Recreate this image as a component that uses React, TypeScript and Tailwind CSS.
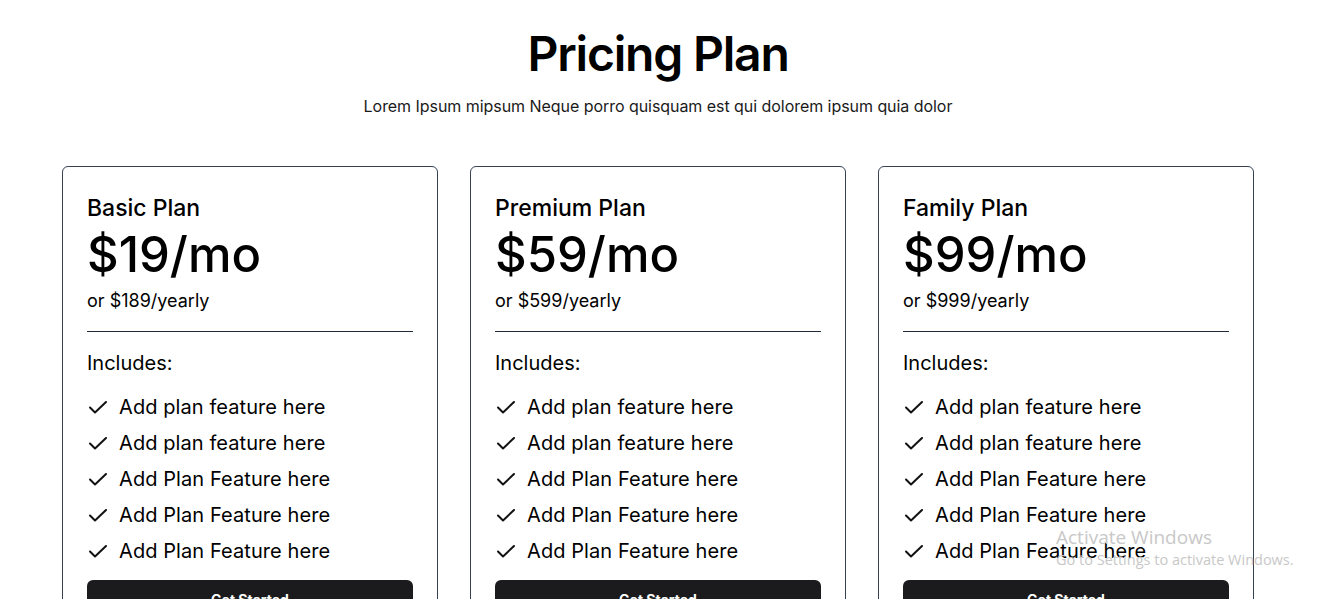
import React from 'react';

const plans = [
  { id: 1, name: 'Basic Plan', price: '$19/mo', yearly: 'or $189/yearly' },
  { id: 2, name: 'Premium Plan', price: '$59/mo', yearly: 'or $599/yearly' },
  { id: 3, name: 'Family Plan', price: '$99/mo', yearly: 'or $999/yearly' },
];

const features = [
  'Add plan feature here',
  'Add plan feature here',
  'Add Plan Feature here',
  'Add Plan Feature here',
  'Add Plan Feature here',
];

const CheckIcon = () => (
  <svg width="18" height="13" viewBox="0 0 18 13" fill="none" className="shrink-0 ml-[2px]">
    <polyline points="1,6.5 6,11.5 17,1" stroke="#111" strokeWidth="2" strokeLinecap="round" strokeLinejoin="round" />
  </svg>
);

const PlanCard: React.FC<{ name: string; price: string; yearly: string }> = ({ name, price, yearly }) => (
  <div className="border border-gray-700 rounded-md px-6 pt-[25px] pb-6 bg-white">
    <h2 className="text-[23px] font-medium text-black leading-8">{name}</h2>
    <div className="text-[49px] font-medium text-black mt-[3px] leading-[56px]">{price}</div>
    <div className="text-lg text-black mt-[4px] leading-7">{yearly}</div>
    <div className="border-t border-gray-800 mt-[16px]"></div>
    <div className="text-xl text-black mt-[17px] leading-7">Includes:</div>
    <ul className="mt-[16px] space-y-2">
      {features.map((f, i) => (
        <li key={i} className="flex items-center gap-3 text-xl text-black leading-7 tracking-[0.08px]">
          <CheckIcon />
          <span>{f}</span>
        </li>
      ))}
    </ul>
    <button className="mt-[15px] w-full h-10 rounded-md bg-[#1b1b1d] text-white text-sm font-bold">
      Get Started
    </button>
  </div>
);

export default function App() {
  return (
    <div className="relative min-h-screen bg-white font-['Inter',sans-serif] text-black overflow-hidden">
      <div className="w-[1192px] ml-[62px] pt-[26px]">
        <div className="text-center">
          <h1 className="text-5xl font-semibold tracking-tight leading-[56px]">Pricing Plan</h1>
          <p className="text-base mt-[12px] text-[#1a1a1a] tracking-[-0.05px]">
            Lorem Ipsum mipsum Neque porro quisquam est qui dolorem ipsum quia dolor
          </p>
        </div>
        <div className="grid grid-cols-3 gap-[32px] mt-[48px]">
          {plans.map((p) => (
            <PlanCard key={p.id} name={p.name} price={p.price} yearly={p.yearly} />
          ))}
        </div>
      </div>
      <div className="absolute left-[1056px] top-[525px] font-['Open_Sans',sans-serif] text-[#c8c8c8] pointer-events-none">
        <div className="text-[19px] leading-6">Activate Windows</div>
        <div className="text-[14.5px] leading-5 mt-[1px]">Go to Settings to activate Windows.</div>
      </div>
    </div>
  );
}
